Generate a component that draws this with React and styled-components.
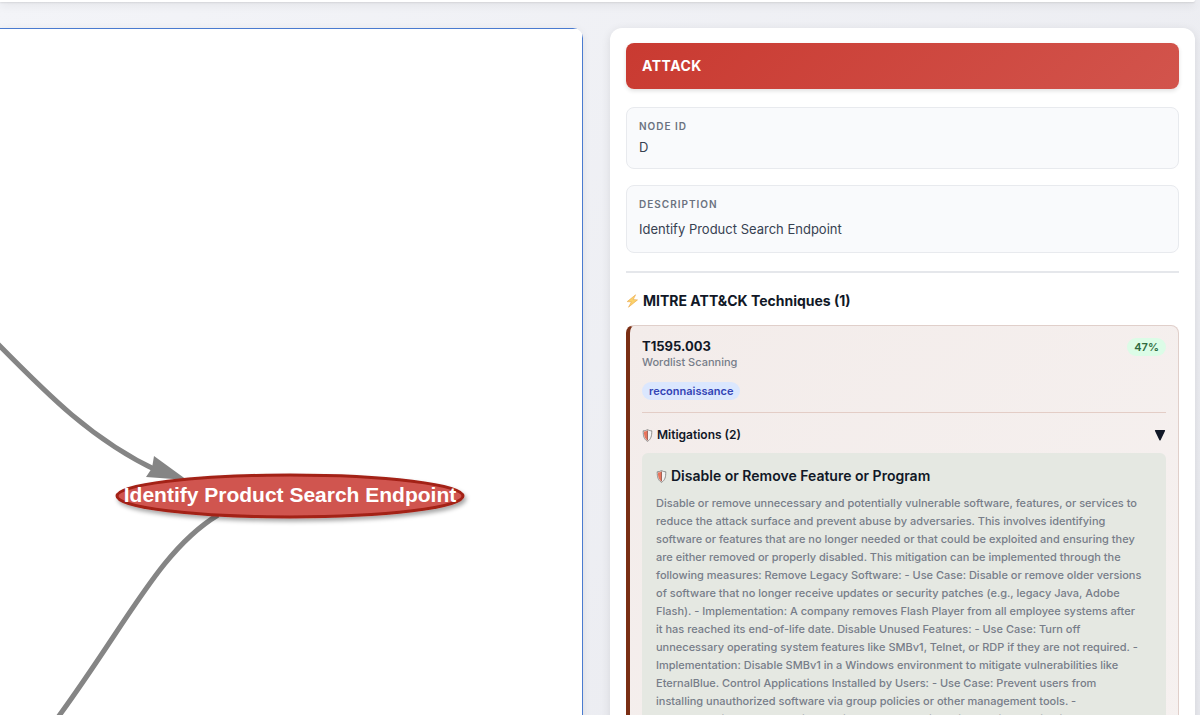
import React, { useState } from "react";
import styled, { createGlobalStyle } from "styled-components";

const GlobalStyle = createGlobalStyle`
  * {
    box-sizing: border-box;
  }

  body {
    margin: 0;
    overflow: hidden;
    font-family: Inter, "Liberation Sans", sans-serif;
    color: #111827;
    background: linear-gradient(135deg, #f3f4f8 0%, #e9eaef 100%);
  }

  h2, h3, h4, p, dl, dt, dd {
    margin: 0;
  }
`;

const Page = styled.div`
  display: flex;
  flex-direction: column;
  gap: 26px;
  height: 100vh;
  padding-right: 5px;
  overflow: hidden;
`;

const TopBar = styled.header`
  flex: none;
  height: 2px;
  background: #fff;
  border-radius: 0 0 12px 0;
  box-shadow: 0 2px 10px rgba(0, 0, 0, 0.2), 0 1px 2px rgba(0, 0, 0, 0.1);
`;

const Columns = styled.main`
  flex: 1;
  min-height: 0;
  display: grid;
  grid-template-columns: minmax(0, 583fr) minmax(0, 585fr);
  gap: 27px;
`;

const Graph = styled.section`
  overflow: hidden;
  background: #fff;
  border-top-right-radius: 10px;
  box-shadow: 0 2px 8px rgba(0, 0, 0, 0.08);
`;

const Canvas = styled.div`
  height: 100%;
  overflow: hidden;
  border-top: 1px solid #4a7bd0;
  border-right: 1px solid #4a7bd0;

  svg {
    display: block;
  }
`;

const NodeLabel = styled.text`
  font: bold 21px "Liberation Sans", Arial, sans-serif;
  fill: #fff;
`;

const Panel = styled.aside`
  height: max-content;
  padding: 15px 16px;
  background: #fff;
  border-radius: 12px;
  box-shadow: 0 2px 10px rgba(0, 0, 0, 0.1);
`;

const Banner = styled.h2`
  padding: 13px 16px;
  font-size: 14px;
  line-height: 20px;
  letter-spacing: 0.5px;
  color: #fff;
  background: linear-gradient(135deg, #c93a31 0%, #d2544c 100%);
  border-radius: 8px;
  box-shadow: 0 2px 4px rgba(0, 0, 0, 0.12);
`;

const Field = styled.dl`
  margin-top: ${(props) => (props.$first ? "18px" : "16px")};
  padding: 12px;
  background: #f9fafc;
  border: 1px solid #e8eaee;
  border-radius: 8px;
`;

const FieldName = styled.dt`
  font-size: 10px;
  font-weight: 600;
  line-height: 12px;
  letter-spacing: 1px;
  text-transform: uppercase;
  color: #6b7280;
`;

const FieldValue = styled.dd`
  padding-top: ${(props) => (props.$long ? "8px" : "6px")};
  font-size: 13px;
  line-height: ${(props) => (props.$long ? "22px" : "18px")};
  color: #374151;
`;

const Divider = styled.hr`
  height: 2px;
  margin: 18px 0;
  border: 0;
  background: #e5e7eb;
`;

const SectionTitle = styled.h3`
  display: flex;
  align-items: center;
  gap: 4px;
  margin-bottom: 14px;
  font-size: 14px;
  line-height: 20px;
`;

const Card = styled.article`
  padding: 12px;
  background: linear-gradient(135deg, #f3ecea 0%, #f6f1f0 100%);
  border: 1px solid #e0cfca;
  border-left: 4px solid #7a2e14;
  border-radius: 8px;
`;

const CardHead = styled.div`
  display: flex;
  justify-content: space-between;
  align-items: flex-start;
  padding-bottom: 12px;
  border-bottom: 1px solid #e3cdc6;
`;

const TechniqueId = styled.h4`
  font-size: 13px;
  line-height: 16px;
`;

const TechniqueName = styled.p`
  margin-bottom: 12px;
  font-size: 11px;
  font-weight: 500;
  line-height: 16px;
  color: #777d89;
`;

const Badge = styled.span`
  display: block;
  width: max-content;
  padding: 0 7px;
  font-size: 11px;
  font-weight: 600;
  line-height: 18px;
  border-radius: 9px;
  color: ${(props) => (props.$score ? "#2f6b40" : "#3344b5")};
  background: ${(props) => (props.$score ? "#dcfce7" : "#dbe7fe")};
`;

const Toggle = styled.button`
  display: flex;
  align-items: center;
  gap: 4px;
  width: 100%;
  padding: 12px 0 8px;
  border: 0;
  background: none;
  font: inherit;
  font-size: 12px;
  font-weight: 600;
  line-height: 20px;
  color: inherit;
  text-align: left;
  cursor: pointer;
`;

const Arrow = styled.svg`
  margin-left: auto;
`;

const Mitigation = styled.div`
  padding: 14px;
  background: #e5e8e2;
  border-radius: 6px;
`;

const MitigationTitle = styled.h4`
  display: flex;
  align-items: center;
  gap: 4px;
  margin-bottom: 9px;
  font-size: 14px;
  font-weight: 600;
  line-height: 18px;
`;

const MitigationText = styled.p`
  padding-right: 9px;
  font-size: 11px;
  font-weight: 500;
  line-height: 18px;
  color: #777d89;
`;

const Bolt = () => (
  <svg width="13" height="14" viewBox="0 0 13 14" aria-hidden="true">
    <path d="M9.6 0.8 1.2 7.6l4.2.3-2.9 5.3 9-7.3-4.3-.4z" fill="#fbd36b" stroke="#eba64a" strokeWidth="0.6" />
  </svg>
);

const Shield = () => (
  <svg width="11" height="13" viewBox="0 0 11 13" aria-hidden="true">
    <path d="M5.5.6C4 1.5 2.5 1.8 1.2 1.8c0 5.1.7 8.300 4.300 10.600C9.100 10.100 9.800 6.900 9.800 1.800 8.500 1.800 7 1.500 5.500.6z" fill="#f3f3f3" stroke="#858382" strokeWidth="0.9" />
    <path d="M5.500 1.400C4.400 2.100 3.200 2.400 1.900 2.500c.1 4.400.7 6.900 3.600 9z" fill="#e8745b" />
    <path d="M5.500 1.500v9.800" stroke="#8d5148" strokeWidth="0.8" />
  </svg>
);

//the slice of the attack tree around the selected node
const AttackGraph = () => (
  <svg width="583" height="687" viewBox="0 29 583 687" role="img" aria-label="Attack graph">
    <defs>
      <filter id="nodeShadow" x="-10%" y="-30%" width="120%" height="180%">
        <feDropShadow dx="2" dy="3" stdDeviation="2" floodOpacity="0.35" />
      </filter>
    </defs>
    <g fill="none" stroke="#858585" strokeWidth="5">
      <path d="M-6 340C48 395 92 440 158 471" />
      <path d="M218 515C160 550 128 622 56 720" />
    </g>
    <path d="M154 456 187 480 146 477 152 468z" fill="#858585" />
    <ellipse cx="290" cy="496" rx="173" ry="21" fill="#d05550" stroke="#a32017" strokeWidth="3" filter="url(#nodeShadow)" />
    <NodeLabel x="290" y="502" textAnchor="middle">Identify Product Search Endpoint</NodeLabel>
  </svg>
);

const App = () => {
  const [open, setOpen] = useState(true);

  return (
    <Page>
      <GlobalStyle />
      <TopBar />
      <Columns>
        <Graph>
          <Canvas>
            <AttackGraph />
          </Canvas>
        </Graph>
        <Panel>
          <Banner>ATTACK</Banner>
          <Field $first>
            <FieldName>Node ID</FieldName>
            <FieldValue>D</FieldValue>
          </Field>
          <Field>
            <FieldName>Description</FieldName>
            <FieldValue $long>Identify Product Search Endpoint</FieldValue>
          </Field>
          <Divider />
          <SectionTitle>
            <Bolt />
            MITRE ATT&amp;CK Techniques (1)
          </SectionTitle>
          <Card>
            <CardHead>
              <div>
                <TechniqueId>T1595.003</TechniqueId>
                <TechniqueName>Wordlist Scanning</TechniqueName>
                <Badge>reconnaissance</Badge>
              </div>
              <Badge $score>47%</Badge>
            </CardHead>
            <Toggle type="button" aria-expanded={open} onClick={() => setOpen(!open)}>
              <Shield />
              Mitigations (2)
              <Arrow width="12" height="12" viewBox="0 0 12 12" aria-hidden="true">
                <path d="M1.500 1h9q1 0 .5 1L6.700 11q-.7 1-1.400 0L1 2q-.5-1 .5-1z" fill="#111827" />
              </Arrow>
            </Toggle>
            {open && (
              <Mitigation>
                <MitigationTitle>
                  <Shield />
                  Disable or Remove Feature or Program
                </MitigationTitle>
                <MitigationText>
                  Disable or remove unnecessary and potentially vulnerable software, features, or services to reduce the attack surface and prevent abuse by adversaries. This involves identifying software or features that are no longer needed or that could be exploited and ensuring they are either removed or properly disabled. This mitigation can be implemented through the following measures: Remove Legacy Software: - Use Case: Disable or remove older versions of software that no longer receive updates or security patches (e.g., legacy Java, Adobe Flash). - Implementation: A company removes Flash Player from all employee systems after it has reached its end-of-life date. Disable Unused Features: - Use Case: Turn off unnecessary operating system features like SMBv1, Telnet, or RDP if they are not required. - Implementation: Disable SMBv1 in a Windows environment to mitigate vulnerabilities like EternalBlue. Control Applications Installed by Users: - Use Case: Prevent users from installing unauthorized software via group policies or other management tools. - Implementation: Block user installations of unauthorized file-sharing applications (e.g., BitTorrent clients) in an enterprise environment.
                </MitigationText>
              </Mitigation>
            )}
          </Card>
        </Panel>
      </Columns>
    </Page>
  );
};

export default App;
